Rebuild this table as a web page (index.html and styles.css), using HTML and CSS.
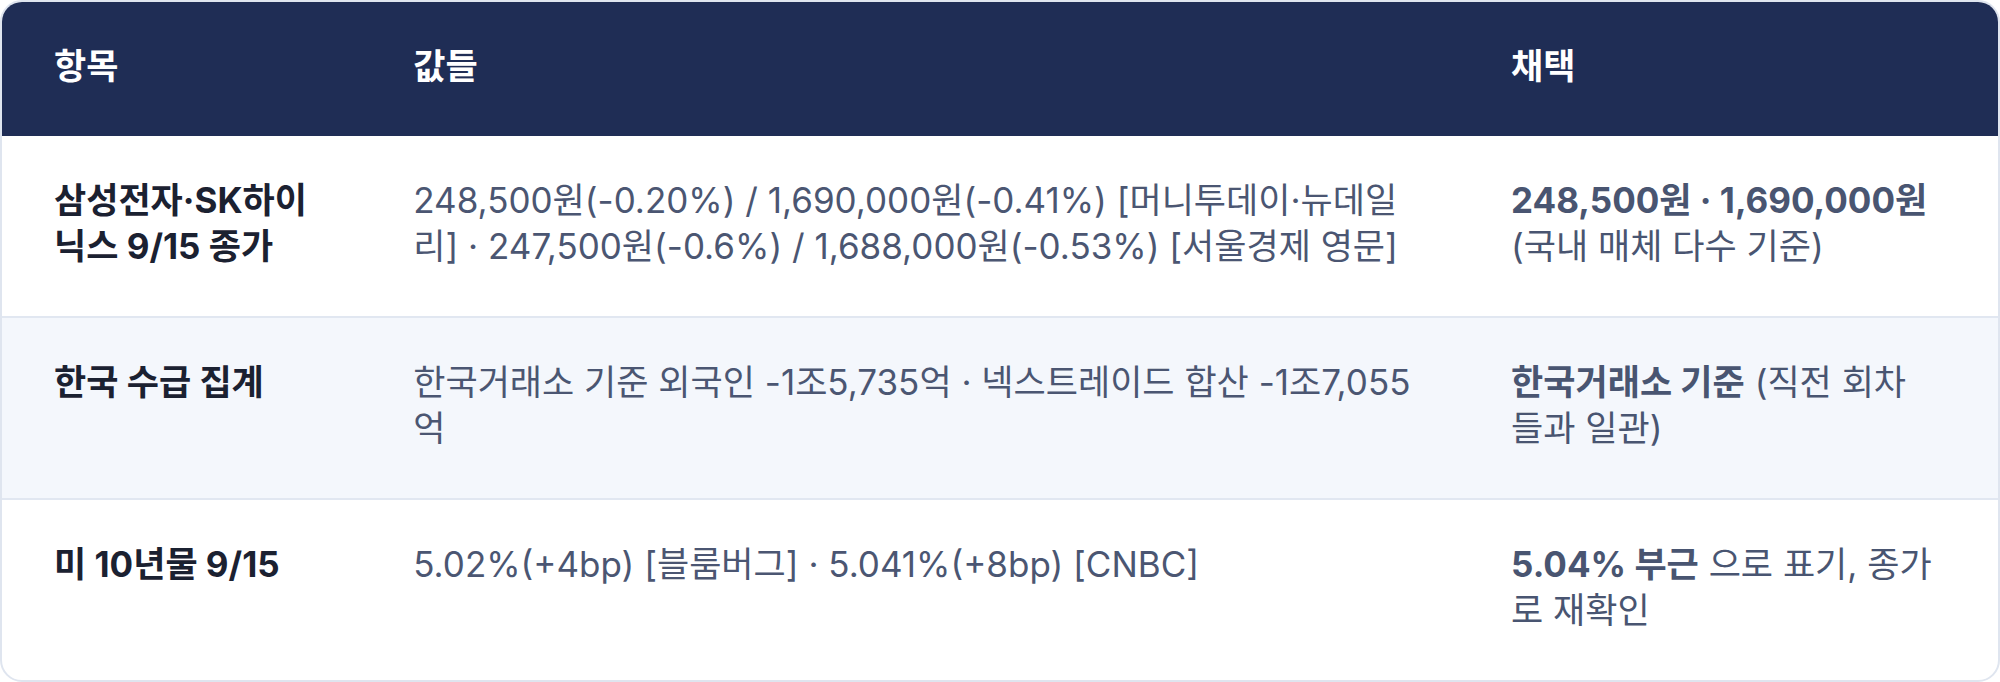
FILE: index.html
```html
<!DOCTYPE html>
<html lang="ko">
<head>
<meta charset="utf-8">
<link rel="stylesheet" href="styles.css">
</head>
<body>
<div class="card">
  <table class="tbl">
    <colgroup>
      <col class="c1">
      <col class="c2">
      <col class="c3">
    </colgroup>
    <thead>
      <tr>
        <th class="col-item">항목</th>
        <th class="col-vals">값들</th>
        <th class="col-pick">채택</th>
      </tr>
    </thead>
    <tbody>
      <tr>
        <td class="col-item label">삼성전자·SK하이닉스 9/15 종가</td>
        <td class="col-vals vals">248,500원(-0.20%) / 1,690,000원(-0.41%) [머니투데이·뉴데일리] · 247,500원(-0.6%) / 1,688,000원(-0.53%) [서울경제 영문]</td>
        <td class="col-pick pick"><strong>248,500원 · 1,690,000원</strong> (국내 매체 다수 기준)</td>
      </tr>
      <tr class="alt">
        <td class="col-item label">한국 수급 집계</td>
        <td class="col-vals vals">한국거래소 기준 외국인 -1조5,735억 · 넥스트레이드 합산 -1조7,055억</td>
        <td class="col-pick pick"><strong>한국거래소 기준</strong> (직전 회차들과 일관)</td>
      </tr>
      <tr>
        <td class="col-item label">미 10년물 9/15</td>
        <td class="col-vals vals">5.02%(+4bp) [블룸버그] · 5.041%(+8bp) [CNBC]</td>
        <td class="col-pick pick"><strong>5.04% 부근</strong> 으로 표기, 종가로 재확인</td>
      </tr>
    </tbody>
  </table>
</div>
</body>
</html>
```

FILE: styles.css
```css
html, body {
  margin: 0;
  padding: 0;
  background: #ffffff;
}
body {
  font-family: Inter, "Noto Sans CJK KR", sans-serif;
  font-size: 35px;
  line-height: 46px;
}
.card {
  border: 2px solid #dfe5ef;
  border-radius: 22px;
  overflow: hidden;
  background: #ffffff;
}
.tbl {
  width: 100%;
  border-collapse: collapse;
  table-layout: fixed;
}
.c1 { width: 18%; }
.c2 { width: 55%; }
.c3 { width: 27%; }
.tbl th,
.tbl td {
  padding: 41px 40px 47px 52px;
  text-align: left;
  vertical-align: top;
}
.tbl th {
  background: #1f2d55;
  color: #ffffff;
  font-weight: 700;
}
.tbl td {
  border-top: 2px solid #e1e7f1;
}
.tbl tbody tr:first-child td {
  border-top: none;
}
.tbl .col-pick {
  padding-right: 63px;
}
.alt td {
  background: #f4f7fc;
}
.label {
  color: #1b2131;
  font-weight: 700;
}
.vals {
  color: #4b5672;
}
.pick {
  color: #495571;
}
.pick strong {
  font-weight: 700;
}
```
